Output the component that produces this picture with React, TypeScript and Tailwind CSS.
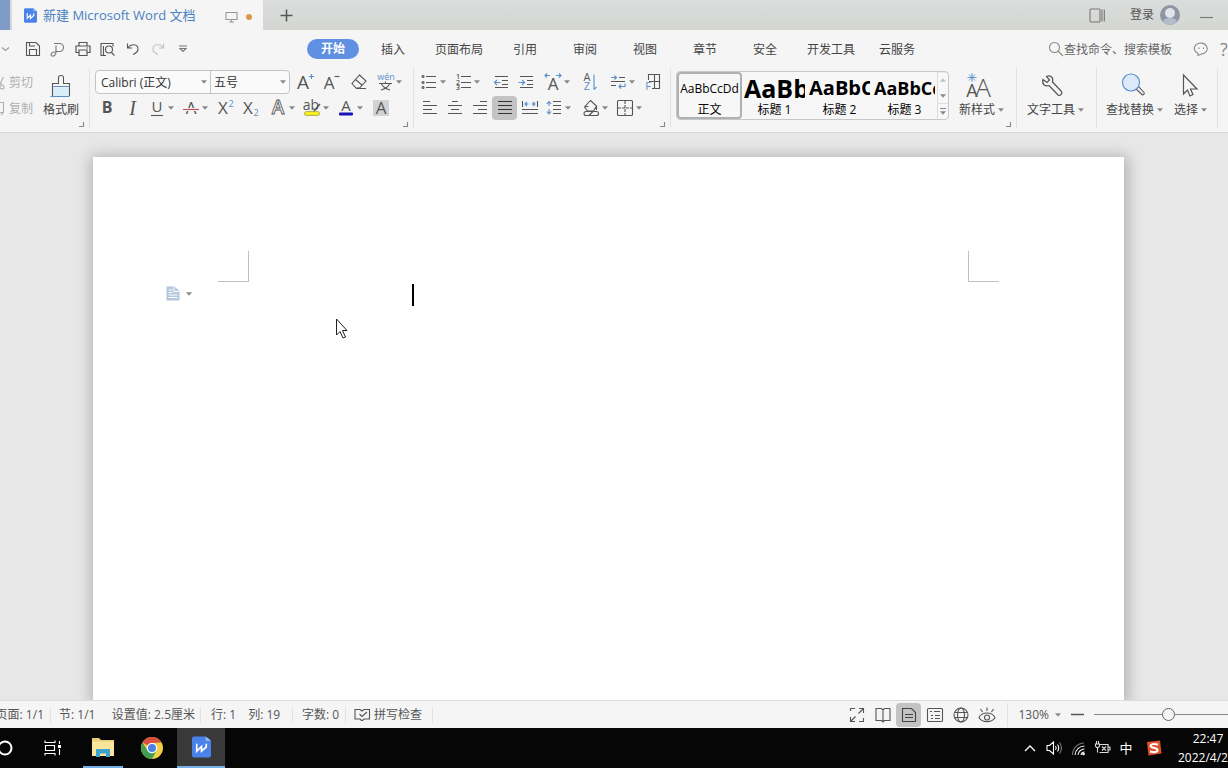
import type { ReactNode } from 'react';

const BLUE = '#5c8fc9';
const INK = '#555';

function Icon({ w = 20, h = 20, children }: { w?: number; h?: number; children: ReactNode }) {
  return (
    <svg width={w} height={h} viewBox={`0 0 ${w} ${h}`} fill="none" stroke={INK} strokeWidth="1.1" className="shrink-0 overflow-visible">
      {children}
    </svg>
  );
}

// Letter used inside an icon
function Letter({ x, y, size, color = INK, weight = 400, children }: { x: number; y: number; size: number; color?: string; weight?: number; children: string }) {
  return (
    <text x={x} y={y} fontSize={size} fill={color} stroke="none" textAnchor="middle" fontWeight={weight}>
      {children}
    </text>
  );
}

function Caret() {
  return (
    <svg width="6" height="4" viewBox="0 0 6 4" fill="#888" className="shrink-0">
      <path d="M0 0.300h6L3 3.700z" />
    </svg>
  );
}

function Tool({ label, children, active }: { label: string; children: ReactNode; active?: boolean }) {
  return (
    <button
      aria-label={label}
      className={active ? 'flex h-6 w-[25px] items-center justify-center rounded bg-[#c3c3c3]' : 'flex h-6 w-[25px] items-center justify-center'}
    >
      {children}
    </button>
  );
}

function SplitTool({ label, children }: { label: string; children: ReactNode }) {
  return (
    <button aria-label={label} className="flex h-6 w-[34px] items-center">
      <span className="flex w-[23px] justify-center">{children}</span>
      <Caret />
    </button>
  );
}

function BigTool({ label, children, caret = true }: { label: string; children: ReactNode; caret?: boolean }) {
  return (
    <button className="flex flex-col items-center gap-1 text-xs text-[#444]">
      <span className={caret ? 'flex h-7 items-end pr-2' : 'flex h-7 items-end'}>{children}</span>
      <span className="flex items-center gap-[3px] leading-4">
        {label}
        {caret && <Caret />}
      </span>
    </button>
  );
}

function Group({ children, launcher, className = '' }: { children: ReactNode; launcher?: string; className?: string }) {
  return (
    <div className={`flex shrink-0 flex-col border-r border-[#e2e2e2] pt-0.5 ${className}`}>
      <div className="h-[52px]">{children}</div>
      {launcher && (
        <button aria-label={launcher} className="mr-1 self-end">
          <Icon w={8} h={8}>
            <path d="M2 6.500h4.500V2" stroke="#888" />
          </Icon>
        </button>
      )}
    </div>
  );
}

function WpsLogo({ w, h }: { w: number; h: number }) {
  return (
    <svg width={w} height={h} viewBox="0 0 18 20" className="shrink-0">
      <path d="M2 0h11l5 4v14a2 2 0 0 1-2 2H2a2 2 0 0 1-2-2V2a2 2 0 0 1 2-2z" fill="#4a82ea" />
      <path d="M13 0l5 4h-5z" fill="#9dbdf2" />
      <path d="M4.500 7v7L9 9.500V14l4.500-4V7" fill="none" stroke="#fff" strokeWidth="1.600" />
    </svg>
  );
}

function TitleBar() {
  return (
    <header className="flex h-[30px] shrink-0 bg-linear-to-b from-[#dadddc] to-[#d3d6d1]">
      <div className="mr-0.5 w-[10px] bg-[#7f9cc9]" />
      <div className="flex w-[251px] items-center bg-[#f5f5f5] pl-3 text-[#4a80c0]">
        <WpsLogo w={13} h={15} />
        <span className="ml-1.5 pt-0.5 text-[13px] whitespace-nowrap">新建 Microsoft Word 文档</span>
        <span className="mr-[11px] ml-auto flex items-center gap-2 pt-1">
          <Icon w={13} h={12}>
            <path d="M1 1.500h11v7H1zM6.500 8.500v2.500M4 11h5" stroke="#999" />
          </Icon>
          <span className="size-1.5 rounded-full bg-[#d9974f]" />
        </span>
      </div>
      <button aria-label="新建标签" className="flex w-[46px] items-center justify-center">
        <Icon w={13} h={13}>
          <path d="M6.500 0.500v12M0.500 6.500h12" stroke="#555" strokeWidth="1.500" />
        </Icon>
      </button>
      <div className="-mr-1 ml-auto flex items-center text-xs text-[#555]">
        <button aria-label="工作区" className="mr-[25px]">
          <Icon w={16} h={15}>
            <rect x="1" y="1" width="10" height="13" rx="1" stroke="#777" />
            <path d="M13 1.500v12M15.300 1.500v12" stroke="#777" />
          </Icon>
        </button>
        <button className="flex items-center gap-1.5">
          登录
          <svg width="20" height="20" viewBox="0 0 20 20">
            <circle cx="10" cy="10" r="10" fill="#8f96a3" />
            <circle cx="10" cy="8" r="5" fill="#dfe3ea" />
            <path d="M3 17c1-3.500 3.500-4 7-4s6 .5 7 4A10 10 0 0 1 10 20a10 10 0 0 1-7-3z" fill="#b5bbc8" />
          </svg>
        </button>
        <button aria-label="最小化" className="ml-5 w-8 pt-1.5">
          <Icon w={14} h={4}>
            <path d="M0 1.500h13" stroke="#777" />
          </Icon>
        </button>
      </div>
    </header>
  );
}

const tabs = ['插入', '页面布局', '引用', '审阅', '视图', '章节', '安全', '开发工具', '云服务'];

function MenuBar() {
  return (
    <nav className="flex h-[38px] shrink-0 items-center overflow-hidden">
      <button aria-label="菜单" className="w-5">
        <Icon w={10} h={8}>
          <path d="M2 2.500l3.500 3L9 2.500" stroke="#999" />
        </Icon>
      </button>
      <Tool label="保存">
        <Icon w={14} h={14}>
          <path d="M1 0.500h9l3.500 3.500v9.500H0.500V0.500zM3.500 13V7.500h7V13M3.500 0.500v3.500H9" />
        </Icon>
      </Tool>
      <Tool label="输出为PDF">
        <Icon w={15} h={15}>
          <path d="M4 1.500h5.500a4 4 0 0 1 0 8H6V3.500M6 9.500c0 5.500-5 5.500-5 3S5 9.500 6.500 10.500" stroke="#777" />
        </Icon>
      </Tool>
      <Tool label="打印">
        <Icon w={16} h={16}>
          <path d="M4 5V1.500h8V5M4 11.500H1V5h14v6.500h-3M4 9h8v5.500H4zM11.500 7h1.500" strokeWidth="1.200" />
        </Icon>
      </Tool>
      <Tool label="打印预览">
        <Icon w={15} h={15}>
          <path d="M6 13.500H1V1.500h12v3M3.500 4v9" />
          <circle cx="9" cy="7.500" r="3.500" />
          <path d="M11.500 10.500l3 3" />
        </Icon>
      </Tool>
      <Tool label="撤销">
        <Icon w={14} h={14}>
          <path d="M1.500 1.500v4.500H6M2 5.500c3-4 9.500-3.500 10 1 .3 3-2.500 5-5 6" />
        </Icon>
      </Tool>
      <Tool label="恢复">
        <Icon w={14} h={14}>
          <path d="M12.500 1.500v4.500H8M12 5.500c-3-4-9.500-3.500-10 1-.3 3 2.500 5 5 6" stroke="#c2c2c2" />
        </Icon>
      </Tool>
      <Tool label="自定义快速访问">
        <Icon w={10} h={8}>
          <path d="M1 1h8M2 3.500h6L5 6.500z" stroke="#777" />
        </Icon>
      </Tool>

      <div className="ml-27 flex shrink-0 items-center text-xs text-[#444]">
        <button className="mx-1 h-5 w-13 rounded-full bg-[#5f90e2] font-bold text-white">开始</button>
        {tabs.map((t) => (
          <button key={t} className={t.length === 4 ? 'w-18 pt-0.5' : 'w-15 pt-0.5'}>
            {t}
          </button>
        ))}
      </div>

      <div className="-mr-1 ml-auto flex shrink-0 items-center">
        <label htmlFor="search" aria-label="搜索">
          <Icon w={16} h={16}>
            <circle cx="6.500" cy="6.500" r="5" stroke="#888" />
            <path d="M10 10l5 5" stroke="#888" />
          </Icon>
        </label>
        <input id="search" placeholder="查找命令、搜索模板" className="w-[125px] bg-transparent pt-px text-xs outline-none placeholder:text-[#666]" />
        <Tool label="反馈">
          <Icon w={15} h={15}>
            <path d="M4 11.500A6.500 5.500 0 1 1 7.500 12L4 13.500z" stroke="#888" />
            <path d="M5 5.500v1.500M9.500 5.500v1.500" stroke="#888" />
          </Icon>
        </Tool>
        <button aria-label="帮助" className="w-[18px] pl-1.5 text-left text-lg leading-5 text-[#888]">
          ?
        </button>
      </div>
    </nav>
  );
}

const styles = [
  { name: '标题 1', sample: 'AaBb', size: 'text-[25px]' },
  { name: '标题 2', sample: 'AaBbC', size: 'text-xl' },
  { name: '标题 3', sample: 'AaBbCc', size: 'text-lg' },
];

function Ribbon() {
  return (
    <section className="flex h-[65px] shrink-0 overflow-hidden border-b border-[#d5d5d5] pb-1">
      <Group launcher="剪贴板设置" className="w-[90px]">
        <div className="flex justify-between pr-2.5">
          <div className="flex flex-col gap-0.5 text-xs text-[#b0b0b0]">
            <button className="flex h-6 items-center gap-1 pt-0.5">
              <Icon w={5} h={16}>
                <path d="M0 9L3.500 2M0 8l2 2" stroke="#b0b0b0" />
                <circle cx="2" cy="12" r="2" stroke="#b0b0b0" />
              </Icon>
              剪切
            </button>
            <button className="flex h-6 items-center gap-1 pt-0.5">
              <Icon w={5} h={16}>
                <path d="M0 1.500h3.500v10L1 14M0 11.500h3.500" stroke="#b0b0b0" />
              </Icon>
              复制
            </button>
          </div>
          <BigTool label="格式刷" caret={false}>
            <Icon w={22} h={24}>
              <path d="M2.500 13.500h17v9h-17z" fill="#d9ecfa" stroke="none" />
              <path d="M2.500 22V9.500h6V3.500q0-2 2.500-2t2.500 2v6h6V22" />
              <path d="M2.500 12.500h17M0.500 22.500h19" stroke={BLUE} />
            </Icon>
          </BigTool>
        </div>
      </Group>

      <Group launcher="字体设置" className="w-[324px] pl-[5px]">
        <div className="flex gap-0.5">
          <div className="flex h-6 w-[195px] rounded border border-[#c4c4c4] bg-[#fafafa] text-xs text-[#333]">
            <label className="flex w-[115px] items-center border-r border-[#c4c4c4] pr-[3px]">
              <select aria-label="字体" className="min-w-0 flex-1 appearance-none bg-transparent pt-px pl-[5px] outline-none">
                <option>Calibri (正文)</option>
              </select>
              <Caret />
            </label>
            <label className="flex flex-1 items-center pr-[3px]">
              <select aria-label="字号" className="min-w-0 flex-1 appearance-none bg-transparent pt-px pl-[3px] outline-none">
                <option>五号</option>
              </select>
              <Caret />
            </label>
          </div>
          <Tool label="增大字号">
            <Icon w={18} h={18}>
              <Letter x={7} y={16} size={19}>A</Letter>
              <path d="M13 3.500h5M15.500 1v5" stroke={BLUE} />
            </Icon>
          </Tool>
          <Tool label="减小字号">
            <Icon w={18} h={18}>
              <Letter x={6} y={16} size={17}>A</Letter>
              <path d="M11.500 3.500h5" />
            </Icon>
          </Tool>
          <Tool label="清除格式">
            <Icon w={16} h={16}>
              <path d="M8.500 1l6.500 6-6.500 7H5L1 9.500zM4.500 5.500l7 6M5 14.500h10" />
            </Icon>
          </Tool>
          <SplitTool label="拼音指南">
            <Icon w={20} h={18}>
              <Letter x={11} y={7} size={9} color={BLUE}>wén</Letter>
              <path d="M4 10.500h13M10.500 8.500v2M6.500 11c1.500 3 4.500 5 8.500 6M14.500 11c-1.500 3-4.500 5-8.500 6" />
            </Icon>
          </SplitTool>
        </div>
        <div className="mt-0.5 flex gap-[3px]">
          <div className="flex">
            <Tool label="加粗">
              <Icon w={16} h={18}>
                <Letter x={7} y={14} size={16} weight={700}>B</Letter>
              </Icon>
            </Tool>
            <Tool label="倾斜">
              <span className="font-['Liberation_Serif'] text-xl leading-5 text-[#555] italic">I</span>
            </Tool>
            <SplitTool label="下划线">
              <Icon w={14} h={18}>
                <Letter x={7} y={13} size={15}>U</Letter>
                <path d="M1 16.500h12" />
              </Icon>
            </SplitTool>
            <SplitTool label="删除线">
              <Icon w={18} h={18}>
                <Letter x={9} y={15} size={17}>A</Letter>
                <path d="M1 10.500h16" stroke="#f5f5f5" strokeWidth="3" />
                <path d="M1 10.500h16" stroke="#c0504d" />
              </Icon>
            </SplitTool>
            <Tool label="上标">
              <Icon w={18} h={18}>
                <Letter x={6} y={15} size={17}>X</Letter>
                <Letter x={14} y={8} size={9} color={BLUE}>2</Letter>
              </Icon>
            </Tool>
            <Tool label="下标">
              <Icon w={18} h={18}>
                <Letter x={6} y={15} size={17}>X</Letter>
                <Letter x={14} y={17} size={9} color={BLUE}>2</Letter>
              </Icon>
            </Tool>
          </div>
          <div className="flex">
            <SplitTool label="文字效果">
              <Icon w={18} h={18}>
                <text x="9" y="15" fontSize="19" fontWeight="600" textAnchor="middle" strokeWidth="0.800">
                  A
                </text>
              </Icon>
            </SplitTool>
            <SplitTool label="突出显示">
              <Icon w={18} h={18}>
                <Letter x={8} y={11} size={14}>ab</Letter>
                <path d="M17 5l-6 7" strokeWidth="1.500" />
                <rect x="1.500" y="12.500" width="15" height="4" rx="2" fill="#f4ef1f" stroke="#8d8a2a" strokeWidth="0.600" />
              </Icon>
            </SplitTool>
            <SplitTool label="字体颜色">
              <Icon w={18} h={18}>
                <Letter x={9} y={12} size={15}>A</Letter>
                <rect x="2" y="13.500" width="14" height="3" rx="1" fill="#1414b8" stroke="none" />
              </Icon>
            </SplitTool>
            <Tool label="字符底纹">
              <Icon w={16} h={16}>
                <rect width="16" height="16" fill="#d2d2d2" stroke="none" />
                <Letter x={8} y={14} size={17}>A</Letter>
              </Icon>
            </Tool>
          </div>
        </div>
      </Group>

      <Group launcher="段落设置" className="w-[257px] pl-[3px]">
        <div className="flex gap-[3px]">
          <div className="flex">
            <SplitTool label="项目符号">
              <Icon w={16} h={16}>
                <path d="M5 2.500h10M5 8.500h10M5 13.500h10" />
                <circle cx="2" cy="2.500" r="1" />
                <circle cx="2" cy="8.500" r="1" />
                <circle cx="2" cy="13.500" r="1" />
              </Icon>
            </SplitTool>
            <SplitTool label="编号">
              <Icon w={16} h={18}>
                <path d="M6 3.500h10M6 9.500h10M6 14.500h10" />
                <Letter x={3} y={6} size={7} weight={600}>1</Letter>
                <Letter x={3} y={12} size={7} weight={600}>2</Letter>
                <Letter x={3} y={17} size={7} weight={600}>3</Letter>
              </Icon>
            </SplitTool>
          </div>
          <div className="flex">
            <Tool label="减少缩进">
              <Icon w={16} h={16}>
                <path d="M2 2.500h13M9 6.500h6M9 10.500h6M2 13.500h13" />
                <path d="M7.500 8.500H1.500M4 6L1.500 8.500 4 11" stroke={BLUE} />
              </Icon>
            </Tool>
            <Tool label="增加缩进">
              <Icon w={16} h={16}>
                <path d="M2 2.500h13M9 6.500h6M9 10.500h6M2 13.500h13" />
                <path d="M0.500 8.500h6M4 6l2.500 2.500L4 11" stroke={BLUE} />
              </Icon>
            </Tool>
          </div>
          <SplitTool label="中文版式">
            <Icon w={18} h={18}>
              <Letter x={9} y={17} size={17}>A</Letter>
              <path d="M1 2.500h5M3 .5l-2 2 2 2M17 2.500h-5M15 .5l2 2-2 2" stroke={BLUE} />
            </Icon>
          </SplitTool>
          <Tool label="排序">
            <Icon w={16} h={18}>
              <Letter x={4} y={8} size={11}>A</Letter>
              <Letter x={4} y={17} size={11} color={BLUE}>Z</Letter>
              <path d="M11 1.500v15M11 16.500l2.500-2.500" stroke={BLUE} />
            </Icon>
          </Tool>
          <div className="flex">
            <SplitTool label="显示标记">
              <Icon w={16} h={16}>
                <path d="M9 3.500h6M1 7.500h14M1 11.500h5" />
                <path d="M1 3.500h5.500M4.500 1.500l2 2-2 2M15 9.500V12.500H9M11 10.500l-2 2 2 2" stroke={BLUE} />
              </Icon>
            </SplitTool>
            <Tool label="制表位">
              <Icon w={17} h={18}>
                <path d="M4.500 7V1.500h11v14H8M10.500 1.500v14M5 8.500h11" />
                <Letter x={4} y={17} size={11} color={BLUE}>F</Letter>
              </Icon>
            </Tool>
          </div>
        </div>
        <div className="mt-0.5 flex gap-[3px]">
          <div className="flex">
            <Tool label="左对齐">
              <Icon w={16} h={16}>
                <path d="M1 1.500h7M1 5.500h14M1 9.500h9M1 13.500h14" />
              </Icon>
            </Tool>
            <Tool label="居中对齐">
              <Icon w={16} h={16}>
                <path d="M5 1.500h6M1 5.500h14M4 9.500h8M1 13.500h14" />
              </Icon>
            </Tool>
            <Tool label="右对齐">
              <Icon w={16} h={16}>
                <path d="M8 1.500h7M1 5.500h14M6 9.500h9M1 13.500h14" />
              </Icon>
            </Tool>
            <Tool label="两端对齐" active>
              <Icon w={16} h={16}>
                <path d="M1 1.500h14M1 5.500h14M1 9.500h14M1 13.500h14" stroke="#333" />
              </Icon>
            </Tool>
            <Tool label="分散对齐">
              <Icon w={18} h={16}>
                <path d="M1.500 1v6M16.500 1v6M1 9.500h16M1 13.500h16" />
                <path d="M4 4h3.500M14 4h-3.500M6 2L4 4l2 2M12 2l2 2-2 2" stroke={BLUE} />
              </Icon>
            </Tool>
            <SplitTool label="行距">
              <Icon w={16} h={16}>
                <path d="M7 1.500h8M7 5.500h8M7 9.500h8M7 13.500h8" />
                <path d="M3 1.500v4.500M3 9v5M.8 4L3 1.500 5.200 4M.8 11.500L3 14 5.200 11.500" stroke={BLUE} />
              </Icon>
            </SplitTool>
          </div>
          <div className="flex">
            <SplitTool label="底纹颜色">
              <Icon w={18} h={18}>
                <path d="M8.500 1.500l6 5.500-3 5H5.500L2.500 8zM3 7.500h3.500M14.500 7v4" />
                <path d="M4 12.500h10.500a2 2 0 0 1 0 4H4a2 2 0 0 1 0-4zM7 16.500l4-4" />
              </Icon>
            </SplitTool>
            <SplitTool label="边框">
              <Icon w={16} h={16}>
                <rect x="0.500" y="0.500" width="15" height="15" rx="1" />
                <path d="M8 1v14M1 8h14" strokeDasharray="3 1" />
              </Icon>
            </SplitTool>
          </div>
        </div>
      </Group>

      <Group launcher="样式设置" className="w-[346px] pl-[5px]">
        <div className="flex gap-2.5">
          <div className="mt-px flex h-[49px] rounded border border-[#c8c8c8] bg-[#f7f7f7] text-xs text-black">
            <button className="flex w-[65px] flex-col items-center justify-end overflow-hidden rounded-sm border-2 border-[#b0b0b0]">
              <span className="flex h-[30px] items-center">AaBbCcDd</span>
              <span className="leading-[14px]">正文</span>
            </button>
            {styles.map((s) => (
              <button key={s.name} className="flex w-[65px] flex-col items-center justify-end overflow-hidden px-0.5 pb-0.5">
                <span className={`flex h-[31px] w-full items-center overflow-hidden font-bold ${s.size} leading-7`}>{s.sample}</span>
                <span className="leading-[14px]">{s.name}</span>
              </button>
            ))}
            <div className="flex w-[11px] flex-col divide-y divide-[#ddd] border-l border-[#ddd]">
              <button aria-label="上一行" className="flex flex-1 rotate-180 items-center justify-center opacity-50">
                <Caret />
              </button>
              <button aria-label="下一行" className="flex flex-1 items-center justify-center">
                <Caret />
              </button>
              <button aria-label="更多样式" className="flex flex-1 flex-col items-center justify-center gap-0.5">
                <span className="h-px w-1.5 bg-[#888]" />
                <Caret />
              </button>
            </div>
          </div>
          <BigTool label="新样式">
            <Icon w={26} h={26}>
              <Letter x={7} y={25} size={18}>A</Letter>
              <Letter x={18} y={25} size={26} weight={300}>A</Letter>
              <path d="M7 1v9M2.500 5.500h9M4 2.500l6 6M10 2.500l-6 6" stroke={BLUE} strokeWidth="0.900" />
            </Icon>
          </BigTool>
        </div>
      </Group>

      <Group className="w-20 pl-2.5">
        <BigTool label="文字工具">
          <Icon w={20} h={24}>
            <path d="M1 5.500l4 3 2.500-2.500L4.500 2.500C8 .5 12 3.500 10.500 8l9 9.500c1.500 2-1.500 5-3.500 3.500L7 11.500C3 13-.5 10 1 5.500z" strokeWidth="1.200" />
          </Icon>
        </BigTool>
      </Group>

      <Group className="w-[121px] pl-[9px]">
        <div className="flex gap-[11px]">
          <BigTool label="查找替换">
            <Icon w={20} h={25}>
              <path d="M15.500 15l2-1.500 5.500 6c1 1.500-1 3-2 2l-5.500-5z" />
              <circle cx="10" cy="9.500" r="8.500" fill="#dceafa" stroke={BLUE} strokeWidth="1.200" />
            </Icon>
          </BigTool>
          <BigTool label="选择">
            <Icon w={16} h={25}>
              <path d="M4.500 2v19l4-4 2.500 6 3-1.500-2.500-5.500H18z" strokeWidth="1.200" />
            </Icon>
          </BigTool>
        </div>
      </Group>
    </section>
  );
}

function Document() {
  return (
    <main className="relative flex min-h-0 flex-1 overflow-hidden bg-[#e7e7e7] pt-6 pr-[104px] pl-[93px]">
      <article className="flex-1 bg-white pt-[94px] shadow-[1px_2px_14px_3px_rgba(0,0,0,0.24)]">
        <div className="flex justify-between px-[125px]">
          <div className="size-[31px] border-r border-b border-[#c0c0c0]" />
          <div className="size-[31px] border-b border-l border-[#c0c0c0]" />
        </div>
        <div className="mt-0.5 flex items-start pl-[73px]">
          <button aria-label="段落布局" className="flex items-center gap-1.5 pt-0.5">
            <svg width="14" height="15" viewBox="0 0 14 15">
              <path d="M0.500 0.500h8l5 4.500v9.500h-13z" fill="#b5c7dc" />
              <path d="M8 1v4.500h5" fill="none" stroke="#fff" />
              <path d="M2.500 4h4M2.500 6.500h4M2.500 9h9M2.500 11.500h9" stroke="#fff" />
            </svg>
            <Caret />
          </button>
          <span className="ml-[220px] h-[22px] w-0.5 bg-black" />
        </div>
      </article>
      <svg width="14" height="22" viewBox="0 0 14 22" className="absolute top-[185px] left-[335px]">
        <path d="M1.500 1v16l3.500-3.500 3 6.500 2.500-1-3-6.500h4.500z" fill="#fff" stroke="#222" />
      </svg>
    </main>
  );
}

function StatusBar() {
  return (
    <footer className="flex h-7 shrink-0 items-center overflow-hidden border-t border-[#dcdcdc] text-xs whitespace-nowrap text-[#555]">
      <div className="flex w-[51px] shrink-0 justify-end border-r border-[#e2e2e2] pr-1.5">
        <span>页面: 1/1</span>
      </div>
      <div className="flex w-[150px] justify-between border-r border-[#e2e2e2] pr-[5px] pl-2">
        <span>节: 1/1</span>
        <span>设置值: 2.5厘米</span>
      </div>
      <div className="flex w-[92px] gap-3 border-r border-[#e2e2e2] pl-2.5">
        <span>行: 1</span>
        <span>列: 19</span>
      </div>
      <div className="w-[53px] border-r border-[#e2e2e2] pl-[9px]">字数: 0</div>
      <button className="flex w-[87px] items-center gap-[3px] border-r border-[#e2e2e2] pl-2">
        <Icon w={17} h={14}>
          <path d="M7.500 12.500L6 11H1V1.500h5l2 1.500 2-1.500h5.500V11H10l-1.500 1.500zM5.500 6l2.500 2.500L13 4" />
        </Icon>
        拼写检查
      </button>

      <div className="-mr-3.5 ml-auto flex shrink-0 items-center">
        <div className="flex gap-px border-r border-[#e2e2e2] pr-2">
          <Tool label="全屏">
            <Icon w={16} h={16}>
              <path d="M6 1.500H1.500V4M10 1.500h4.500V6M14.500 1.500L9.500 6.500M1.500 10v4.500H6M1.500 14.500l5-5M10 14.500h4.500V11" />
            </Icon>
          </Tool>
          <Tool label="阅读版式">
            <Icon w={16} h={16}>
              <path d="M8 3L6.500 1.500H1v12h5.500L8 15l1.500-1.500H15v-12H9.500zM8 3v12" />
            </Icon>
          </Tool>
          <Tool label="页面视图" active>
            <Icon w={16} h={16}>
              <path d="M1.500 1.500h9l4 4v9h-13zM4 7.500h8M4 10.500h8" stroke="#444" />
            </Icon>
          </Tool>
          <Tool label="大纲">
            <Icon w={16} h={16}>
              <rect x="0.500" y="1.500" width="15" height="13" rx="1" />
              <path d="M3 4.500h2M4 8.500h2M4 11.500h2M7 4.500h6M8 8.500h5M8 11.500h5" />
            </Icon>
          </Tool>
          <Tool label="Web版式">
            <Icon w={16} h={16}>
              <circle cx="8" cy="8" r="7" />
              <ellipse cx="8" cy="8" rx="3.500" ry="7" />
              <path d="M2 5.500h12M2 10.500h12" />
            </Icon>
          </Tool>
          <Tool label="护眼模式">
            <Icon w={18} h={16}>
              <path d="M1 10.500c3-6 13-6 16 0-3 5.500-13 5.500-16 0z" />
              <circle cx="9" cy="10.500" r="2.500" />
              <path d="M9 4V.5M4.500 5L2.500 2M13.500 5l2-3" />
            </Icon>
          </Tool>
        </div>
        <button className="ml-2.5 flex items-center gap-1.5">
          130%
          <Caret />
        </button>
        <button aria-label="缩小" className="mx-2.5">
          <Icon w={13} h={4}>
            <path d="M0 1.500h13" strokeWidth="1.500" />
          </Icon>
        </button>
        <input
          type="range"
          aria-label="缩放比例"
          defaultValue={50}
          className="w-[148px] appearance-none bg-transparent [&::-webkit-slider-runnable-track]:h-px [&::-webkit-slider-runnable-track]:bg-[#888] [&::-webkit-slider-thumb]:-mt-1.5 [&::-webkit-slider-thumb]:size-[13px] [&::-webkit-slider-thumb]:appearance-none [&::-webkit-slider-thumb]:rounded-full [&::-webkit-slider-thumb]:border [&::-webkit-slider-thumb]:border-[#666] [&::-webkit-slider-thumb]:bg-[#f5f5f5]"
        />
      </div>
    </footer>
  );
}

function TaskBar() {
  return (
    <div className="flex h-10 shrink-0 justify-between overflow-hidden bg-[#060606] text-white">
      <div className="-ml-[19px] flex gap-px">
        <button aria-label="Cortana" className="flex w-12 items-center justify-center">
          <Icon w={16} h={16}>
            <circle cx="8" cy="8" r="6.500" stroke="#fff" strokeWidth="2" />
          </Icon>
        </button>
        <button aria-label="任务视图" className="flex w-12 items-center justify-center">
          <Icon w={20} h={16}>
            <path d="M1 0.500v2h10v-2M1 15.500v-2h10v2M1.500 5.500h9v5h-9zM15.500 1v3M15.500 9v6" stroke="#fff" />
            <path d="M14 5h3v3h-3z" fill="#fff" stroke="none" />
          </Icon>
        </button>
        <button aria-label="文件资源管理器" className="mx-1 flex w-10 items-center justify-center border-b-2 border-[#76b0e8]">
          <svg width="22" height="20" viewBox="0 0 22 20">
            <path d="M0 1h7l2 2h13v16H0z" fill="#e9cd78" />
            <path d="M0 4.500h22V19H0z" fill="#f9e59c" />
            <path d="M4 20v-8h14v8h-4v-3.500H8V20z" fill="#3fa3cf" />
          </svg>
        </button>
        <button aria-label="Chrome" className="flex w-12 items-center justify-center">
          <svg width="22" height="22" viewBox="0 0 22 22">
            <circle cx="11" cy="11" r="11" fill="#f3cf45" />
            <path d="M1.500 5.500A11 11 0 0 1 20.500 5.500L11 6v5z" fill="#d9503f" />
            <path d="M1.500 5.500A11 11 0 0 0 11 22l4.500-8.500L11 11l-4.500 2.500z" fill="#3f9e54" />
            <circle cx="11" cy="11" r="5.200" fill="#fff" />
            <circle cx="11" cy="11" r="4" fill="#4a82e4" />
          </svg>
        </button>
        <button aria-label="WPS" className="flex w-12 items-center justify-center border-b-2 border-[#76b0e8] bg-[#393939]">
          <WpsLogo w={19} h={22} />
        </button>
      </div>

      <div className="-mr-2.5 flex shrink-0 items-center">
        <button aria-label="显示隐藏的图标" className="flex w-6 justify-center">
          <Icon w={12} h={8}>
            <path d="M1 7l5-5 5 5" stroke="#fff" strokeWidth="1.300" />
          </Icon>
        </button>
        <button aria-label="音量" className="flex w-6 justify-center">
          <Icon w={17} h={16}>
            <path d="M1 5.500h2.500L7.500 2v12l-4-3.500H1zM9.500 6q1.500 2 0 4M11.500 4.500q2.500 3.500 0 7" stroke="#fff" />
            <path d="M13.500 2.500q4 5.500 0 11" stroke="#777" />
          </Icon>
        </button>
        <button aria-label="网络" className="flex w-6 justify-center">
          <Icon w={15} h={16}>
            <path d="M1.500 15A12 12 0 0 1 13 3" stroke="#777" />
            <path d="M4 15a9.500 9.500 0 0 1 9.500-9M7 15a6.500 6.500 0 0 1 6.500-6M10 15a3.500 3.500 0 0 1 3.500-3" stroke="#eee" />
            <circle cx="12.500" cy="14" r="1.300" fill="#fff" stroke="none" />
          </Icon>
        </button>
        <button aria-label="电池" className="flex w-6 justify-center">
          <Icon w={17} h={16}>
            <path d="M5.500 4.500H14v8H5.500M14 7h2v3h-2M8 6.500l4 4M12 6.500l-4 4M3.500 7.500v5" stroke="#ddd" />
            <path d="M1.500 4h4v2l-1 1.500h-2L1.500 6zM2.500 4V1M4.500 4V1" stroke="#ddd" />
          </Icon>
        </button>
        <button className="w-6 pt-px text-[13px]">中</button>
        <button aria-label="搜狗输入法" className="flex w-8 justify-center">
          <svg width="16" height="16" viewBox="0 0 16 16">
            <path d="M1 2l13-1.500 1.500 13L2.500 15.500z" fill="#e0522c" />
            <path d="M12 4.500C7 3.500 4.500 4 4.500 6s7 1.500 7 4-3.500 2.500-7.500 1.500" fill="none" stroke="#fff" strokeWidth="2" />
          </svg>
        </button>
        <button className="ml-2 w-[60px] text-xs leading-[19px]">
          <span className="block">22:47</span>
          <span className="block text-left">2022/4/2</span>
        </button>
      </div>
    </div>
  );
}

export default function App() {
  return (
    <div className="flex h-screen flex-col overflow-hidden bg-[#f5f5f5] font-['Open_Sans','Noto_Sans_CJK_SC',sans-serif]">
      <TitleBar />
      <MenuBar />
      <Ribbon />
      <Document />
      <StatusBar />
      <TaskBar />
    </div>
  );
}
